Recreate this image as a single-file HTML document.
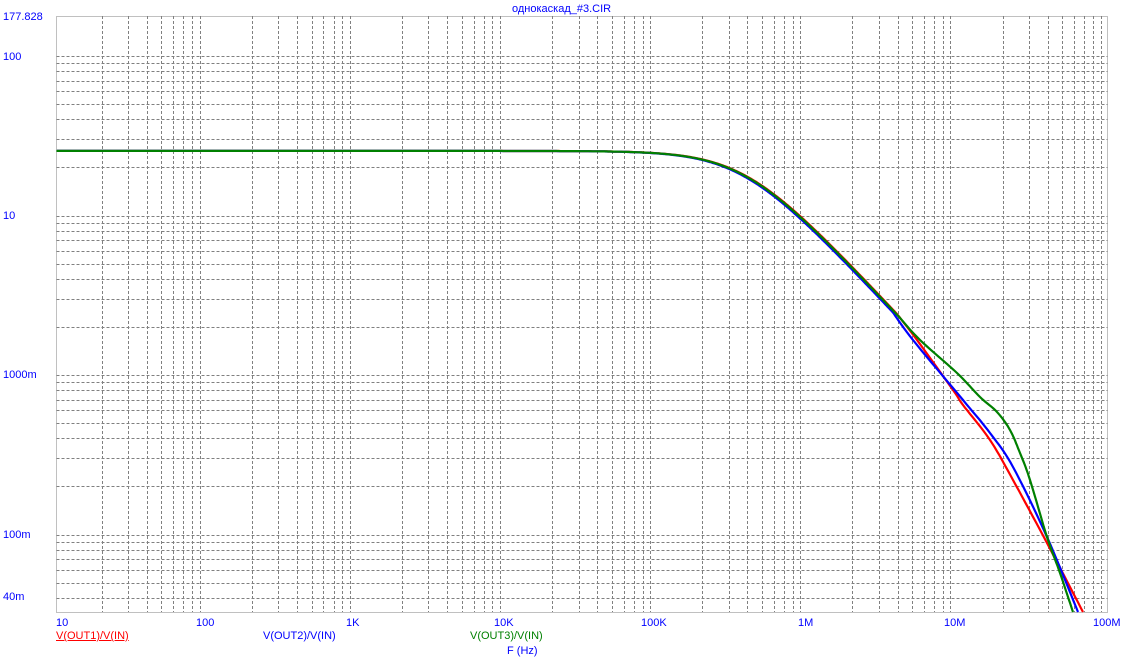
<!DOCTYPE html>
<html><head><meta charset="utf-8"><style>
html,body{margin:0;padding:0;background:#fff;}
body{width:1139px;height:664px;position:relative;overflow:hidden;font-family:"Liberation Sans","DejaVu Sans",sans-serif;font-size:11px;color:#0000ff;}
.t{position:absolute;white-space:nowrap;line-height:12px;}
svg{position:absolute;left:0;top:0;}
</style></head><body>
<svg id="s" width="1139" height="664"></svg>
<div class="t" style="left:512px;top:3px;">однокаскад_#3.CIR</div>
<div class="t" style="left:3px;top:11px;">177.828</div>
<div class="t" style="left:3px;top:51px;">100</div>
<div class="t" style="left:3px;top:210px;">10</div>
<div class="t" style="left:3px;top:369px;">1000m</div>
<div class="t" style="left:3px;top:529px;">100m</div>
<div class="t" style="left:3px;top:591px;">40m</div>
<div class="t" style="left:56px;top:617px;">10</div>
<div class="t" style="left:196px;top:617px;">100</div>
<div class="t" style="left:346px;top:617px;">1K</div>
<div class="t" style="left:494px;top:617px;">10K</div>
<div class="t" style="left:641px;top:617px;">100K</div>
<div class="t" style="left:798px;top:617px;">1M</div>
<div class="t" style="left:944px;top:617px;">10M</div>
<div class="t" style="left:1093px;top:617px;">100M</div>
<div class="t" style="left:56px;top:630px;color:#ff0000;text-decoration:underline;">V(OUT1)/V(IN)</div>
<div class="t" style="left:263px;top:630px;">V(OUT2)/V(IN)</div>
<div class="t" style="left:470px;top:630px;color:#008000;">V(OUT3)/V(IN)</div>
<div class="t" style="left:507px;top:645px;">F (Hz)</div>
<script>
var s=document.getElementById('s'),NS='http://www.w3.org/2000/svg';
var L=56.5,R=1107.5,T=16,B=612,DX=(R-L)/7,DY=159.5;
function X(f){return L+DX*(Math.log10(f)-1);}
function Y(v){return 56+DY*(2-Math.log10(v));}
function el(n,a){var e=document.createElementNS(NS,n);for(var k in a)e.setAttribute(k,a[k]);s.appendChild(e);return e;}
var g='#808080';
for(var d=1;d<8;d++)for(var k=2;k<=9;k++){var x=Math.round(X(k*Math.pow(10,d)))+0.5;el('line',{x1:x,y1:T,x2:x,y2:B,stroke:g,'stroke-dasharray':'3,2'});}
for(var d=-2;d<=2;d++)for(var k=1;k<=9;k++){var v=k*Math.pow(10,d);if(v<0.035||v>101)continue;var y=Math.round(Y(v))+0.5;el('line',{x1:L,y1:y,x2:R,y2:y,stroke:g,'stroke-dasharray':'3,2'});}
el('rect',{x:L,y:T+0.5,width:R-L,height:B-T,fill:'none',stroke:g,'stroke-dasharray':'1,1'});
function pole(f,p){return Math.sqrt(1+(f/p)*(f/p));}
function red(f){return 25.4/pole(f,3.8e5)/pole(f,4e7);}
function blue(f){return 25.4/pole(f,3.65e5)/pole(f,4e7);}
function green(f){return 25.4/pole(f,3.75e5)/pole(f,6e7);}
var PTS={
 r:[[917,340],[953,390],[963,405],[990,440],[1013,480],[1047,543],[1083,612]],
 b:[[913,340],[963,400],[990,433],[1013,467],[1047,537],[1078,612]],
 g:[[920,340],[957,373],[980,397],[997,412],[1010,430],[1020,453],[1030,480],[1047,537],[1060,573],[1073,612]]
};
function curve(fn,pts,c){var p='',x0=pts[0][0]-20;
 for(var x=L;x<x0;x+=1){var f=Math.pow(10,1+(x-L)/DX);var y=Y(fn(f));p+=(p?'L':'M')+x.toFixed(1)+','+y.toFixed(1);}
 var fx=Math.pow(10,1+(x0-L)/DX),y0=Y(fn(fx));
 var all=[[x0,y0]].concat(pts);
 // smooth via Catmull-Rom
 for(var i=0;i<all.length-1;i++){var a=all[Math.max(i-1,0)],b=all[i],c2=all[i+1],d=all[Math.min(i+2,all.length-1)];
  for(var t=0.1;t<=1.001;t+=0.1){var t2=t*t,t3=t2*t;
   var xx=0.5*((2*b[0])+(-a[0]+c2[0])*t+(2*a[0]-5*b[0]+4*c2[0]-d[0])*t2+(-a[0]+3*b[0]-3*c2[0]+d[0])*t3);
   var yy=0.5*((2*b[1])+(-a[1]+c2[1])*t+(2*a[1]-5*b[1]+4*c2[1]-d[1])*t2+(-a[1]+3*b[1]-3*c2[1]+d[1])*t3);
   p+='L'+xx.toFixed(1)+','+yy.toFixed(1);}}
 el('path',{d:p,fill:'none',stroke:c,'stroke-width':2.2});}
curve(red,PTS.r,'#ff0000');curve(blue,PTS.b,'#0000ff');curve(green,PTS.g,'#008000');
</script>
</body></html>
